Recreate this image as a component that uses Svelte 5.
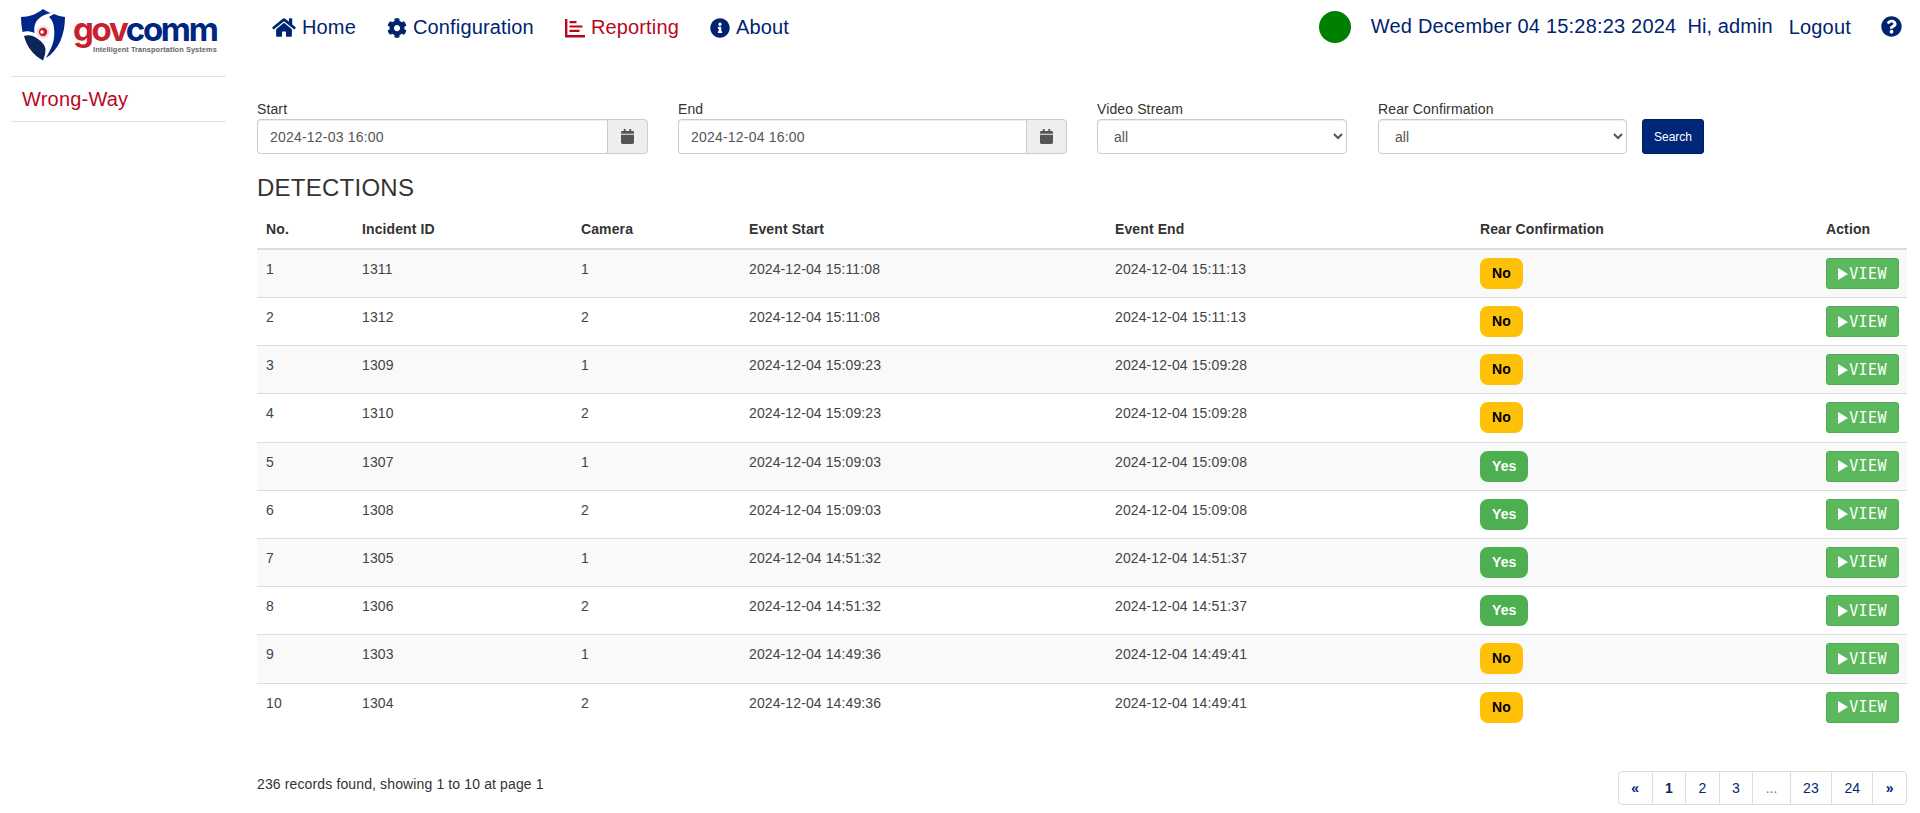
<script>
  const rows = [
    [1, 1311, 1, '2024-12-04 15:11:08', '2024-12-04 15:11:13', 'No'],
    [2, 1312, 2, '2024-12-04 15:11:08', '2024-12-04 15:11:13', 'No'],
    [3, 1309, 1, '2024-12-04 15:09:23', '2024-12-04 15:09:28', 'No'],
    [4, 1310, 2, '2024-12-04 15:09:23', '2024-12-04 15:09:28', 'No'],
    [5, 1307, 1, '2024-12-04 15:09:03', '2024-12-04 15:09:08', 'Yes'],
    [6, 1308, 2, '2024-12-04 15:09:03', '2024-12-04 15:09:08', 'Yes'],
    [7, 1305, 1, '2024-12-04 14:51:32', '2024-12-04 14:51:37', 'Yes'],
    [8, 1306, 2, '2024-12-04 14:51:32', '2024-12-04 14:51:37', 'Yes'],
    [9, 1303, 1, '2024-12-04 14:49:36', '2024-12-04 14:49:41', 'No'],
    [10, 1304, 2, '2024-12-04 14:49:36', '2024-12-04 14:49:41', 'No']
  ];
  const pages = ['«', '1', '2', '3', '...', '23', '24', '»'];
  const cal = 'M12 192h424c6.6 0 12 5.4 12 12v260c0 26.5-21.5 48-48 48H48c-26.5 0-48-21.5-48-48V204c0-6.6 5.4-12 12-12zm436-44v-36c0-26.5-21.5-48-48-48h-48V12c0-6.6-5.4-12-12-12h-40c-6.6 0-12 5.4-12 12v52H160V12c0-6.6-5.4-12-12-12h-40c-6.6 0-12 5.4-12 12v52H48C21.5 64 0 85.5 0 112v36c0 6.6 5.4 12 12 12h424c6.6 0 12-5.4 12-12z';
</script>

<div class="page">
  <aside class="side">
    <div class="logo">
      <svg class="shield" viewBox="0 0 44 53">
        <path fill="#00268a" d="M0 9 C8 9 16 6 22 1 C24 2.5 27 4 30 5 C24 6 18 9 15 14 C13 18 13 21 13.5 25 C9 23 5 23 1.5 24 C0.5 19 0 14 0 9 Z"/>
        <path fill="#00268a" d="M33 6 C36.5 7.5 40 8.5 44 9 C44 26 38 42 25 50 C28 44 32 38 33 30 C34 22 33 13 28 9 C29.5 8 31 7 33 6 Z"/>
        <path fill="#0b2559" d="M3 28 C8 26 13 28 17 31 C21 34 24 37 24.5 41 C24.5 45 23.5 49 22 52.5 C12 47 6 39 3 28 Z"/>
        <circle cx="22" cy="24" r="6.5" fill="#f4dfe2"/>
        <circle cx="22" cy="24" r="4.2" fill="#c8202f"/>
        <circle cx="21" cy="24" r="1.7" fill="#fff"/>
      </svg>
      <div class="wordmark">
        <div class="word"><span class="gov">gov</span><span class="comm">comm</span></div>
        <div class="tag">Intelligent Transportation Systems</div>
      </div>
    </div>
    <div class="side-item">Wrong-Way</div>
  </aside>

  <div class="main">
    <header class="top">
      <nav class="nav">
        <a class="nav-link">
          <svg class="i home" viewBox="0 0 576 512"><path d="M280.37 148.26L96 300.11V464a16 16 0 0 0 16 16l112.06-.29a16 16 0 0 0 15.92-16V368a16 16 0 0 1 16-16h64a16 16 0 0 1 16 16v95.64a16 16 0 0 0 16 16.05L464 480a16 16 0 0 0 16-16V300L295.67 148.26a12.19 12.19 0 0 0-15.3 0zM571.6 251.47L488 182.56V44.05a12 12 0 0 0-12-12h-56a12 12 0 0 0-12 12v72.61L318.47 43a48 48 0 0 0-61 0L4.34 251.47a12 12 0 0 0-1.6 16.9l25.5 31A12 12 0 0 0 45.15 301l235.22-193.74a12.19 12.19 0 0 1 15.3 0L530.9 301a12 12 0 0 0 16.9-1.6l25.5-31a12 12 0 0 0-1.7-16.93z"/></svg>
          Home
        </a>
        <a class="nav-link">
          <svg class="i" viewBox="0 0 512 512"><path d="M487.4 315.7l-42.6-24.6c4.3-23.2 4.3-47 0-70.2l42.6-24.6c4.9-2.8 7.1-8.6 5.5-14-11.1-35.6-30-67.8-54.7-94.6-3.8-4.1-10-5.1-14.8-2.3L380.8 110c-17.9-15.4-38.5-27.3-60.8-35.1V25.8c0-5.6-3.9-10.5-9.4-11.7-36.7-8.2-74.3-7.8-109.2 0-5.5 1.2-9.4 6.1-9.4 11.7V75c-22.2 7.9-42.8 19.8-60.8 35.1L88.7 85.5c-4.9-2.8-11-1.9-14.8 2.3-24.7 26.7-43.6 58.9-54.7 94.6-1.7 5.4.6 11.2 5.5 14L67.3 221c-4.3 23.2-4.3 47 0 70.2l-42.6 24.6c-4.9 2.8-7.1 8.6-5.5 14 11.1 35.6 30 67.8 54.7 94.6 3.8 4.1 10 5.1 14.8 2.3l42.6-24.6c17.9 15.4 38.5 27.3 60.8 35.1v49.2c0 5.6 3.9 10.5 9.4 11.7 36.7 8.2 74.3 7.8 109.2 0 5.5-1.2 9.4-6.1 9.4-11.7v-49.2c22.2-7.9 42.8-19.8 60.8-35.1l42.6 24.6c4.9 2.8 11 1.9 14.8-2.3 24.7-26.7 43.6-58.9 54.7-94.6 1.5-5.5-.7-11.3-5.6-14.1zM256 336c-44.1 0-80-35.9-80-80s35.9-80 80-80 80 35.9 80 80-35.9 80-80 80z"/></svg>
          Configuration
        </a>
        <a class="nav-link active">
          <svg class="i" viewBox="0 0 20 20"><path d="M0 1h2.4v16H20v2.4H0z"/><path d="M4.5 3h7v2.2h-7zM4.5 7.4h13v2.2h-13zM4.5 11.8h10v2.2h-10z"/></svg>
          Reporting
        </a>
        <a class="nav-link">
          <svg class="i" viewBox="0 0 512 512"><path d="M256 8C119.043 8 8 119.083 8 256c0 136.997 111.043 248 248 248s248-111.003 248-248C504 119.083 392.957 8 256 8zm0 110c23.196 0 42 18.804 42 42s-18.804 42-42 42-42-18.804-42-42 18.804-42 42-42zm56 254c0 6.627-5.373 12-12 12h-88c-6.627 0-12-5.373-12-12v-24c0-6.627 5.373-12 12-12h12v-64h-12c-6.627 0-12-5.373-12-12v-24c0-6.627 5.373-12 12-12h64c6.627 0 12 5.373 12 12v100h12c6.627 0 12 5.373 12 12v24z"/></svg>
          About
        </a>
      </nav>
      <div class="status">
        <span class="dot"></span>
        <span class="clock">Wed December 04 15:28:23 2024</span>
        <span class="hi">Hi, admin</span>
        <a class="logout">Logout</a>
        <svg class="i help" viewBox="0 0 512 512"><path d="M504 256c0 136.997-111.043 248-248 248S8 392.997 8 256C8 119.083 119.043 8 256 8s248 111.083 248 248zM262.655 90c-54.497 0-89.255 22.957-116.549 63.758-3.536 5.286-2.353 12.415 2.715 16.258l34.699 26.31c5.205 3.947 12.621 3.008 16.665-2.122 17.864-22.658 30.113-35.797 57.303-35.797 20.429 0 45.698 13.148 45.698 32.958 0 14.976-12.363 22.667-32.534 33.976C247.128 238.528 216 254.941 216 296v4c0 6.627 5.373 12 12 12h56c6.627 0 12-5.373 12-12v-1.333c0-28.462 83.186-29.647 83.186-106.667 0-58.002-60.165-102-116.531-102zM256 338c-25.365 0-46 20.635-46 46 0 25.364 20.635 46 46 46s46-20.636 46-46c0-25.365-20.635-46-46-46z"/></svg>
      </div>
    </header>

    <section class="filters">
      <div class="field f-date">
        <label for="s">Start</label>
        <div class="group">
          <input id="s" value="2024-12-03 16:00" />
          <span class="addon"><svg viewBox="0 0 448 512"><path d={cal}/></svg></span>
        </div>
      </div>
      <div class="field f-date f-end">
        <label for="e">End</label>
        <div class="group">
          <input id="e" value="2024-12-04 16:00" />
          <span class="addon"><svg viewBox="0 0 448 512"><path d={cal}/></svg></span>
        </div>
      </div>
      <div class="field f-sel">
        <label for="v">Video Stream</label>
        <select id="v"><option>all</option></select>
      </div>
      <div class="field f-sel f-rear">
        <label for="r">Rear Confirmation</label>
        <select id="r"><option>all</option></select>
      </div>
      <button class="search">Search</button>
    </section>

    <h2 class="title">DETECTIONS</h2>

    <table class="table">
      <thead>
        <tr>
          <th>No.</th><th>Incident ID</th><th>Camera</th><th>Event Start</th><th>Event End</th><th>Rear Confirmation</th><th>Action</th>
        </tr>
      </thead>
      <tbody>
        {#each rows as r}
          <tr>
            <td>{r[0]}</td><td>{r[1]}</td><td>{r[2]}</td><td>{r[3]}</td><td>{r[4]}</td>
            <td><span class="badge" class:yes={r[5] === 'Yes'}>{r[5]}</span></td>
            <td>
              <button class="view"><svg viewBox="0 0 10 12"><path d="M0 0l10 6-10 6z"/></svg><span>VIEW</span></button>
            </td>
          </tr>
        {/each}
      </tbody>
    </table>

    <footer class="foot">
      <span class="count">236 records found, showing 1 to 10 at page 1</span>
      <ul class="pager">
        {#each pages as p}
          <li class:cur={p === '1'} class:dots={p === '...'} class:edge={p === '«' || p === '»'}>{p}</li>
        {/each}
      </ul>
    </footer>
  </div>
</div>

<style>
  :global(body) {
    margin: 0;
    background: #fff;
    font-family: "Liberation Sans", Arial, sans-serif;
    color: #333;
  }
  .page {
    display: flex;
    height: 813px;
    overflow: hidden;
  }
  .side {
    width: 215px;
    margin-left: 11px;
    flex: none;
  }
  .logo {
    display: flex;
    height: 77px;
    box-sizing: border-box;
    padding: 8px 0 0 10px;
    gap: 8px;
    border-bottom: 1px solid #e2e2e2;
  }
  .shield { width: 44px; height: 53px; flex: none; }
  .wordmark { padding-top: 7px; }
  .word {
    font-family: "Inter", sans-serif;
    font-weight: 700;
    font-size: 33px;
    line-height: 28px;
    letter-spacing: -2.3px;
    white-space: nowrap;
  }
  .gov { color: #c8202f; }
  .comm { color: #00267f; }
  .tag {
    font-size: 7.4px;
    font-weight: 700;
    color: #666;
    line-height: 9px;
    letter-spacing: 0.08px;
    white-space: nowrap;
    padding-left: 20px;
    margin-top: 2px;
  }
  .side-item {
    height: 44px;
    line-height: 44px;
    padding-left: 11px;
    font-size: 20px;
    letter-spacing: 0.2px;
    color: #b8081c;
    border-bottom: 1px solid #e2e2e2;
  }
  .main {
    flex: 1;
    min-width: 0;
    padding: 0 13px 0 31px;
  }
  .top {
    display: flex;
    justify-content: space-between;
    height: 54px;
    margin-right: -8px;
    color: #00236f;
    font-size: 20px;
  }
  .nav {
    display: flex;
    gap: 31px;
    padding: 16px 0 0 15px;
    align-items: flex-start;
    letter-spacing: 0.15px;
  }
  .nav-link {
    display: flex;
    align-items: center;
    gap: 6px;
    line-height: 23px;
    color: #00236f;
  }
  .nav-link.active { color: #b8081c; }
  .i { width: 20px; height: 20px; fill: currentColor; flex: none; }
  .i.home { width: 24px; height: 21px; }
  .status {
    display: flex;
    align-items: flex-start;
    padding: 11px 13px 0 0;
    letter-spacing: 0.08px;
  }
  .dot {
    width: 32px;
    height: 32px;
    border-radius: 50%;
    background: #008000;
    margin-right: 20px;
  }
  .clock, .hi { line-height: 23px; margin-top: 4px; }
  .clock { margin-right: 11px; letter-spacing: 0.2px; }
  .logout { line-height: 23px; margin: 5px 30px 0 16px; letter-spacing: 0.2px; }
  .help { width: 21px; height: 21px; margin-top: 5px; }

  .filters {
    display: flex;
    align-items: flex-end;
    margin-top: 46px;
    gap: 30px;
  }
  .field { display: flex; flex-direction: column; }
  .f-date { width: 391px; }
  .f-end { width: 389px; }
  .f-sel { width: 250px; }
  .f-rear { width: 249px; margin-left: 1px; }
  label {
    font-size: 14px;
    line-height: 19px;
    color: #333;
    letter-spacing: 0.12px;
  }
  .group { display: flex; height: 35px; }
  input {
    flex: 1;
    min-width: 0;
    box-sizing: border-box;
    height: 35px;
    padding: 0 12px;
    font: 14px "Liberation Sans", Arial, sans-serif;
    letter-spacing: 0.2px;
    color: #555;
    border: 1px solid #ccc;
    border-right: 0;
    border-radius: 4px 0 0 4px;
    box-shadow: inset 0 1px 1px rgba(0,0,0,.075);
    outline: none;
  }
  .addon {
    width: 39px;
    display: flex;
    align-items: center;
    justify-content: center;
    background: #eee;
    border: 1px solid #ccc;
    border-radius: 0 4px 4px 0;
  }
  .addon svg { width: 13px; height: 15px; fill: #555; }
  select {
    box-sizing: border-box;
    height: 35px;
    width: 100%;
    padding: 0 12px;
    font: 14px "Liberation Sans", Arial, sans-serif;
    color: #555;
    background: #fff;
    border: 1px solid #ccc;
    border-radius: 4px;
    box-shadow: inset 0 1px 1px rgba(0,0,0,.075);
  }
  .search {
    width: 62px;
    height: 35px;
    margin-left: -15px;
    padding: 0;
    font: 12px "Liberation Sans", Arial, sans-serif;
    color: #fff;
    background: #002677;
    border: 1px solid #001f63;
    border-radius: 3px;
  }
  .title {
    margin: 21px 0 0;
    font-size: 24px;
    font-weight: 400;
    line-height: 26px;
    letter-spacing: 0.25px;
    color: #333;
  }
  .table {
    width: 100%;
    margin-top: 11px;
    border-collapse: collapse;
    table-layout: fixed;
    font-size: 14px;
    letter-spacing: 0.11px;
  }
  th {
    box-sizing: border-box;
    text-align: left;
    padding: 7px 8px 9px 9px;
    line-height: 20px;
    font-weight: 700;
    color: #333;
    border-bottom: 2px solid #ddd;
  }
  th:nth-child(1) { width: 96px; }
  th:nth-child(2) { width: 219px; }
  th:nth-child(3) { width: 168px; }
  th:nth-child(4) { width: 366px; }
  th:nth-child(5) { width: 365px; }
  th:nth-child(6) { width: 346px; }
  td {
    padding: 8px 8px 8px 9px;
    height: 48.2px;
    box-sizing: border-box;
    line-height: 22px;
    vertical-align: top;
    color: #444;
    border-top: 1px solid #ddd;
  }
  thead + tbody tr:first-child td { border-top: 0; }
  tbody tr:nth-child(odd) { background: #f9f9f9; }
  .badge {
    display: block;
    width: fit-content;
    height: 31px;
    line-height: 31px;
    padding: 0 12px;
    border-radius: 8px;
    font-size: 14px;
    font-weight: 700;
    color: #000;
    background: #ffc107;
  }
  .badge.yes { background: #4caf50; color: #fff; }
  .view {
    display: flex;
    align-items: center;
    justify-content: center;
    gap: 1px;
    width: 73px;
    height: 31px;
    padding: 0;
    color: #fff;
    background: #5cb85c;
    border: 1px solid #4cae4c;
    border-radius: 3px;
    font: 15px "DejaVu Sans Mono", monospace;
    letter-spacing: 0.4px;
  }
  .view svg { width: 10px; height: 12px; fill: #fff; }
  .foot {
    display: flex;
    justify-content: space-between;
    align-items: flex-start;
    margin-top: 40px;
  }
  .count { font-size: 14px; line-height: 20px; padding-top: 3px; color: #333; letter-spacing: 0.13px; }
  .pager {
    display: flex;
    list-style: none;
    margin: 0;
    padding: 0;
    font-size: 14px;
    line-height: 20px;
    color: #002677;
  }
  .pager li {
    padding: 6px 12.4px;
    border: 1px solid #ddd;
    margin-left: -1px;
  }
  .pager li:first-child { border-radius: 4px 0 0 4px; }
  .pager li:last-child { border-radius: 0 4px 4px 0; }
  .pager li.cur { font-weight: 700; color: #0b2a55; }
  .pager li.edge { font-weight: 700; }
  .pager li.dots { color: #777; }
</style>
